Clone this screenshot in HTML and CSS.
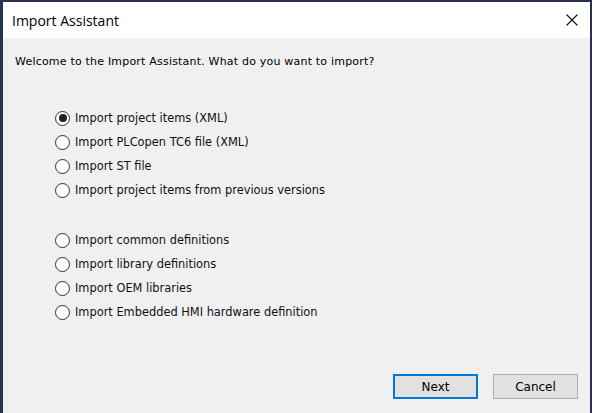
FILE: index.html
```html
<!DOCTYPE html>
<html>
<head>
<meta charset="utf-8">
<link rel="stylesheet" href="styles.css">
</head>
<body>
<div class="window">
  <div class="titlebar">
    <span class="title">Import Assistant</span>
    <svg class="close" width="12" height="12" viewBox="0 0 12 12"><path d="M0.5 0.5 L11.5 11.5 M11.5 0.5 L0.5 11.5" stroke="#111" stroke-width="1.1" fill="none"/></svg>
  </div>
  <div class="content">
    <p class="welcome">Welcome to the Import Assistant. What do you want to import?</p>
    <div class="group">
      <label class="opt"><span class="radio checked"></span>Import project items (XML)</label>
      <label class="opt"><span class="radio"></span>Import PLCopen TC6 file (XML)</label>
      <label class="opt"><span class="radio"></span>Import ST file</label>
      <label class="opt"><span class="radio"></span>Import project items from previous versions</label>
    </div>
    <div class="group">
      <label class="opt"><span class="radio"></span>Import common definitions</label>
      <label class="opt"><span class="radio"></span>Import library definitions</label>
      <label class="opt"><span class="radio"></span>Import OEM libraries</label>
      <label class="opt"><span class="radio"></span>Import Embedded HMI hardware definition</label>
    </div>
    <div class="buttons">
      <button class="btn default">Next</button>
      <button class="btn">Cancel</button>
    </div>
  </div>
</div>
</body>
</html>
```
FILE: styles.css
```css
html, body {
  margin: 0;
  padding: 0;
  height: 100%;
}
body {
  background: #27334d;
  padding: 2px 2px 0 3px;
  box-sizing: border-box;
}
.window {
  height: 100%;
  display: flex;
  flex-direction: column;
  background: #f0f0f0;
}
.titlebar {
  height: 36px;
  background: #ffffff;
  display: flex;
  align-items: center;
  justify-content: space-between;
  padding: 0 12px 0 9px;
  flex-shrink: 0;
}
.title {
  font-family: "Open Sans", sans-serif;
  font-size: 14px;
  color: #000;
}
.close {
  display: block;
}
.content {
  flex: 1;
  display: flex;
  flex-direction: column;
  font-family: "DejaVu Sans", sans-serif;
  font-size: 11px;
  color: #000;
  padding: 0 0 0 12px;
}
.welcome {
  margin: 17px 0 0 0;
  line-height: 14px;
  letter-spacing: 0.2px;
}
.group {
  display: flex;
  flex-direction: column;
  margin-left: 40px;
  margin-top: 37px;
  font-size: 11.4px;
  color: #111;
}
.group + .group {
  margin-top: 26px;
}
.opt {
  display: flex;
  align-items: center;
  height: 24px;
}
.radio {
  width: 15px;
  height: 15px;
  border: 1px solid #333;
  border-radius: 50%;
  background: #fff;
  margin-right: 5px;
  box-sizing: border-box;
  position: relative;
  flex-shrink: 0;
}
.radio.checked::after {
  content: "";
  position: absolute;
  left: 2.5px;
  top: 2.5px;
  width: 8px;
  height: 8px;
  border-radius: 50%;
  background: #222;
}
.buttons {
  margin-top: auto;
  display: flex;
  justify-content: flex-end;
  gap: 15px;
  padding: 0 12px 14px 0;
}
.btn {
  width: 85px;
  height: 25px;
  background: #e1e1e1;
  border: 1px solid #adadad;
  font-family: "DejaVu Sans", sans-serif;
  font-size: 12px;
  color: #000;
  padding: 0;
}
.btn.default {
  border: 2px solid #0078d7;
}
```
